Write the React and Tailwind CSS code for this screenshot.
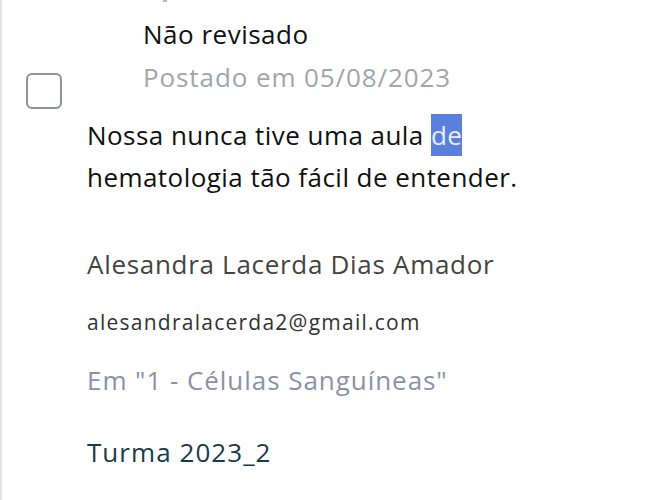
export default function App() {
  return (
    <div
      className="min-h-[500px] w-[648px] border-l-[2px] border-[#e3e3e3] bg-white overflow-hidden"
      style={{ fontFamily: "'Open Sans', 'Noto Sans', sans-serif" }}
    >
      <div className="ml-[161px] h-[2px] w-[4px] bg-[#b8b8b8]" />
      <div className="flex items-start pl-[24px]">
        <div className="mt-[71px] h-[36px] w-[36px] shrink-0 rounded-[6px] border-2 border-[#8f9398]" />
        <div className="ml-[81px] pt-[11px]">
          <div className="text-[26px] leading-[42px] tracking-[0.5px] text-[#111111]">Não revisado</div>
          <div className="mt-[1px] text-[26px] leading-[42px] tracking-[0.9px] text-[#a2a5aa]">
            Postado em 05/08/2023
          </div>
        </div>
      </div>
      <div className="pl-[85px]">
        <p className="mt-[5px] w-[480px] text-[26px] leading-[42px] tracking-[0.45px] text-[#111111]">
          Nossa nunca tive uma aula{" "}
          <span className="bg-[#5b80dc] py-[3px] text-[#e8eeff]">de</span>{" "}
          hematologia tão fácil de entender.
        </p>
        <div className="mt-[45px] text-[26px] leading-[42px] tracking-[0.7px] text-[#444444]">
          Alesandra Lacerda Dias Amador
        </div>
        <div className="mt-[22px] text-[21px] leading-[30px] tracking-[1.25px] text-[#333333]">
          alesandralacerda2@gmail.com
        </div>
        <div className="mt-[22px] text-[26px] leading-[42px] tracking-[0.95px] text-[#8b91a9]">
          Em "1 - Células Sanguíneas"
        </div>
        <div className="mt-[30px] text-[26px] leading-[42px] tracking-[1.05px] text-[#183c4d]">
          Turma 2023_2
        </div>
      </div>
    </div>
  );
}
